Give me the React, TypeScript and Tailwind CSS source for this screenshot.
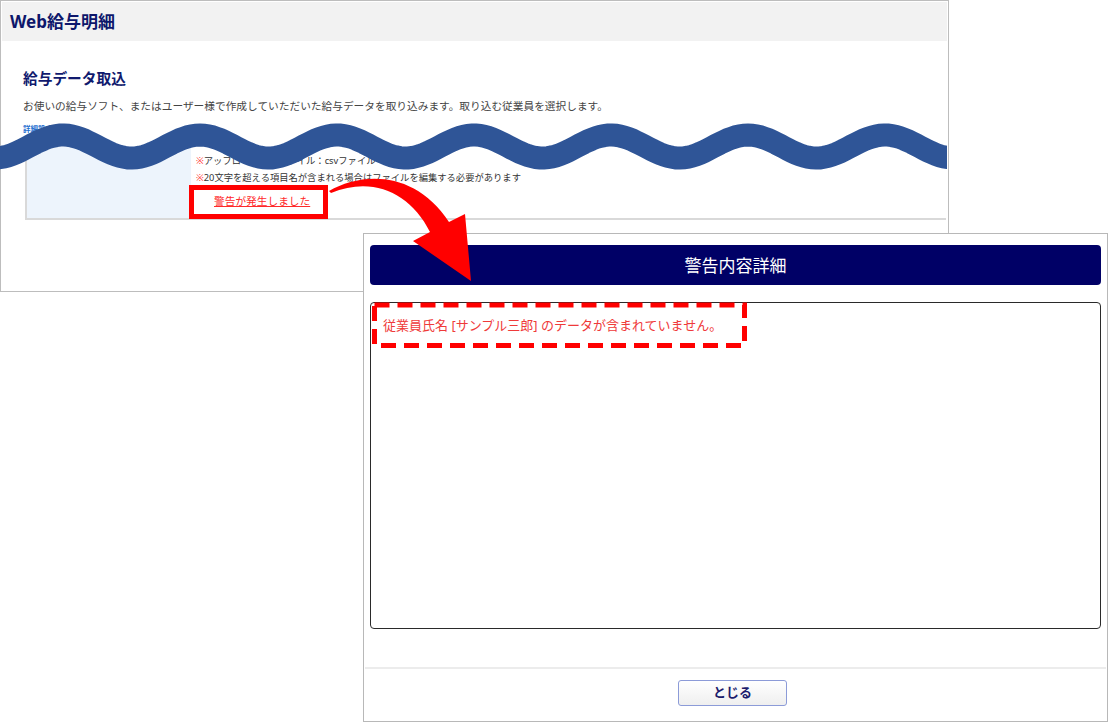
import React from 'react';

// centreline of the torn-edge band: crest every 137px
const wavePath = () => {
  const pts: string[] = [];
  for (let x = -20; x <= 970; x += 4) {
    const y = 146.5 - 11.5 * Math.cos((2 * Math.PI * (x - 63)) / 137);
    pts.push(`${x},${y.toFixed(1)}`);
  }
  return 'M' + pts.join(' L');
};

const PayslipWindow: React.FC = () => {
  return (
    <div className="w-[949px] h-[292px] border border-[#bdbdbd] p-px bg-white">
      <div className="h-[39px] bg-[#f2f2f2] flex items-center pl-[8px]">
        <span className="text-[17px] font-bold text-[#0d176b] leading-none">Web給与明細</span>
      </div>

      <h2 className="ml-[21px] mt-[27px] text-[14.7px] leading-[20px] font-bold text-[#101a6e]">
        給与データ取込
      </h2>
      <p className="ml-[21px] mt-[10px] text-[10.7px] leading-[16px] text-[#444]">
        お使いの給与ソフト、またはユーザー様で作成していただいた給与データを取り込みます。取り込む従業員を選択します。
      </p>
      <p className="ml-[21px] mt-[10px] text-[7.5px] leading-[10px] font-bold text-[#1f6fd0]">詳細設定</p>

      {/* upload settings table */}
      <div className="ml-[23px] mr-px mt-[13px] h-[73px] border-2 border-t-0 border-r-0 border-[#d9d9d9] grid grid-cols-[164px_1fr]">
        <div className="bg-[#edf4fc]" />
        <div className="pl-[5px] pt-[5px] text-[9.3px] leading-[17px] text-[#333]">
          <p>
            <span className="text-[#ff2a2a]">※</span>アップロード可能ファイル：csvファイル
          </p>
          <p>
            <span className="text-[#ff2a2a]">※</span>20文字を超える項目名が含まれる場合はファイルを編集する必要があります
          </p>
          <p className="mt-[7px] ml-[18px] text-[10.7px]">
            <a className="text-[#ff2a2a] underline">警告が発生しました</a>
          </p>
        </div>
      </div>
    </div>
  );
};

const WarningDialog: React.FC = () => {
  return (
    <div className="absolute left-[363px] top-[233px] w-[745px] h-[489px] border border-[#b8b8b8] bg-white flex flex-col">
      <div className="px-[6px] pt-[11px]">
        <div className="h-[40px] rounded-[4px] bg-[#000066] flex items-center justify-center">
          <span className="text-white text-[17px] leading-none">警告内容詳細</span>
        </div>
        <div className="mt-[17px] h-[327px] border-[1.5px] border-[#2a2a2a] rounded-[4px] pl-[12px] pt-[13px]">
          <p className="text-[13px] leading-[19px] text-[#ef3a3a]">
            従業員氏名 [サンプル三郎] のデータが含まれていません。
          </p>
        </div>
      </div>
      <div className="mt-[38px] h-[2px] mx-px bg-[#ececec]" />
      <div className="mt-[10px] pl-[314px]">
        <button className="w-[109px] h-[26px] rounded-[3px] border border-[#8c9bd8] bg-gradient-to-b from-white to-[#efefef] text-[13px] font-bold text-[#1c1c6c] leading-none">
          とじる
        </button>
      </div>
    </div>
  );
};

export default function App() {
  return (
    <div className="relative w-[1108px] h-[722px] overflow-hidden bg-white font-['Noto_Sans','Noto_Sans_CJK_JP',sans-serif]">
      <PayslipWindow />
      <WarningDialog />

      {/* cut-off band across the page */}
      <svg className="absolute left-0 top-[100px]" width="947" height="100" viewBox="0 100 947 100">
        <path d={wavePath()} fill="none" stroke="#2f5597" strokeWidth="23" />
      </svg>

      {/* highlight around the warning link */}
      <div className="absolute left-[189px] top-[185px] w-[139px] h-[34px] border-[5px] border-[#ff0000]" />

      {/* dashed highlight around the message */}
      <svg className="absolute left-[368px] top-[300px]" width="384" height="52" viewBox="368 300 384 52">
        <rect
          x="374.5"
          y="305"
          width="370"
          height="40.5"
          fill="none"
          stroke="#ff0000"
          strokeWidth="5"
          strokeDasharray="15 8"
        />
      </svg>

      {/* callout arrow */}
      <svg className="absolute left-0 top-0" width="1108" height="722" viewBox="0 0 1108 722">
        <path
          d="M329 191 C362 172, 415 170, 449 222 L465 214 L471 281 L413 241 L430 232 C410 192, 372 176, 331 193 Z"
          fill="#ff0000"
        />
      </svg>
    </div>
  );
}
